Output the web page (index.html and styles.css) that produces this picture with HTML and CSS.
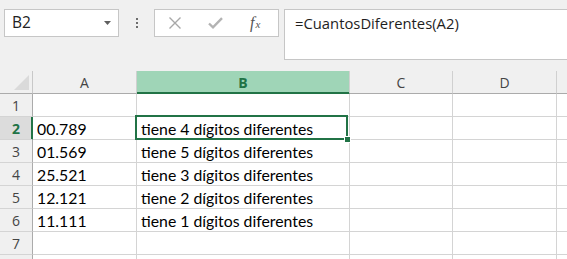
FILE: index.html
```html
<!DOCTYPE html>
<html lang="es">
<head>
<meta charset="utf-8">
<title>Hoja</title>
<link rel="stylesheet" href="styles.css">
</head>
<body>
<div class="app">
  <div class="toolbar">
    <div class="namebox">
      <span class="ref">B2</span>
      <svg class="caret" width="7" height="4" viewBox="0 0 7 4"><polygon points="0,0 7,0 3.5,4" fill="#5f5f5f"/></svg>
    </div>
    <div class="grip"><i></i><i></i><i></i></div>
    <div class="fxbtns">
      <svg class="btn-icon" width="14" height="14" viewBox="0 0 14 14"><path d="M1.5 1.5 L12.5 12.5 M12.5 1.5 L1.5 12.5" stroke="#a8a8a8" stroke-width="1.4" fill="none"/></svg>
      <svg class="btn-icon" width="15" height="12" viewBox="0 0 15 12"><path d="M1 6.5 L5 10.3 L14 1.2" stroke="#b3b3b3" stroke-width="2.4" fill="none"/></svg>
      <span class="fx"><span class="fx-f">f</span><span class="fx-x">x</span></span>
    </div>
    <div class="formula">=CuantosDiferentes(A2)</div>
  </div>

  <div class="sheet">
    <div class="corner"><svg width="15" height="15" viewBox="0 0 15 15"><polygon points="15,0 15,15 0,15" fill="#dadada"/></svg></div>
    <div class="colhead">A</div>
    <div class="colhead active">B</div>
    <div class="colhead">C</div>
    <div class="colhead">D</div>
    <div class="colhead"></div>

    <div class="rowhead">1</div><div class="cell"></div><div class="cell"></div><div class="cell"></div><div class="cell"></div><div class="cell"></div>
    <div class="rowhead active">2</div><div class="cell">00.789</div><div class="cell">tiene 4 dígitos diferentes</div><div class="cell"></div><div class="cell"></div><div class="cell"></div>
    <div class="rowhead">3</div><div class="cell">01.569</div><div class="cell">tiene 5 dígitos diferentes</div><div class="cell"></div><div class="cell"></div><div class="cell"></div>
    <div class="rowhead">4</div><div class="cell">25.521</div><div class="cell">tiene 3 dígitos diferentes</div><div class="cell"></div><div class="cell"></div><div class="cell"></div>
    <div class="rowhead">5</div><div class="cell">12.121</div><div class="cell">tiene 2 dígitos diferentes</div><div class="cell"></div><div class="cell"></div><div class="cell"></div>
    <div class="rowhead">6</div><div class="cell">11.111</div><div class="cell">tiene 1 dígitos diferentes</div><div class="cell"></div><div class="cell"></div><div class="cell"></div>
    <div class="rowhead">7</div><div class="cell"></div><div class="cell"></div><div class="cell"></div><div class="cell"></div><div class="cell"></div>
    <div class="rowhead"></div><div class="cell"></div><div class="cell"></div><div class="cell"></div><div class="cell"></div><div class="cell"></div>
  </div>

  <div class="selection"></div>
  <div class="handle"></div>
</div>
</body>
</html>
```

FILE: styles.css
```css
* { box-sizing: border-box; }
html, body { margin: 0; padding: 0; }
body { background: #f0f0f0; }

.app {
  position: relative;
  width: 567px;
  height: 259px;
  overflow: hidden;
  background: #f0f0f0;
  font-family: "Open Sans", "Noto Sans", sans-serif;
}

/* ---------- toolbar ---------- */
.toolbar {
  display: flex;
  align-items: flex-start;
  height: 71px;
  padding: 9px 0 0 4px;
}
.namebox {
  flex: none;
  width: 115px;
  height: 28px;
  background: #fff;
  border: 1px solid #c6c6c6;
  display: flex;
  align-items: center;
  justify-content: space-between;
  padding: 0 7px 0 7px;
}
.ref {
  font-size: 15.5px;
  color: #222;
  line-height: 1;
}
.caret { display: block; margin-top: -1px; }

.grip {
  flex: none;
  width: 35px;
  height: 28px;
  display: flex;
  flex-direction: column;
  align-items: center;
  justify-content: center;
  gap: 2px;
}
.grip i {
  display: block;
  width: 2px;
  height: 2px;
  background: #6d6d6d;
}

.fxbtns {
  flex: none;
  width: 125px;
  height: 28px;
  background: #fff;
  border: 1px solid #c6c6c6;
  display: flex;
  align-items: center;
  padding-left: 13px;
}
.fxbtns .btn-icon { display: block; flex: none; }
.fxbtns .btn-icon:nth-child(2) { margin-left: 26px; }
.fx {
  margin-left: 27px;
  font-family: "Liberation Serif", "DejaVu Serif", serif;
  font-style: italic;
  color: #555;
  line-height: 1;
  display: flex;
  align-items: baseline;
}
.fx-f { font-size: 16px; }
.fx-x { font-size: 11px; margin-left: 1px; }

.formula {
  flex: none;
  width: 320px;
  height: 51px;
  margin-left: 5px;
  background: #fff;
  border: 1px solid #c6c6c6;
  padding: 3px 0 0 10px;
  font-size: 14.8px;
  line-height: 20px;
  color: #1e1e1e;
}

/* ---------- sheet ---------- */
.sheet {
  display: grid;
  grid-template-columns: 33px 104px 213px 103px 104px 60px;
  grid-auto-rows: 23px;
}
.corner, .colhead, .rowhead {
  background: #f0f0f0;
  color: #444;
  font-size: 14px;
  display: flex;
  align-items: center;
  justify-content: center;
}
.corner {
  border-right: 1px solid #c8c8c8;
  border-bottom: 1px solid #ababab;
  align-items: flex-end;
  justify-content: flex-end;
  padding: 0 3px 3px 0;
}
.corner svg { display: block; }
.colhead {
  border-right: 1px solid #d0d0d0;
  border-bottom: 1px solid #ababab;
  padding-top: 1px;
}
.colhead.active {
  background: #9fd5b7;
  color: #217346;
  font-weight: 700;
  border-bottom-color: #217346;
  box-shadow: inset 0 -1px 0 #217346;
}
.rowhead {
  border-right: 1px solid #ababab;
  border-bottom: 1px solid #d4d4d4;
}
.rowhead.active {
  background: #dcdcdc;
  color: #217346;
  font-weight: 700;
  border-right-color: #217346;
  box-shadow: inset -1px 0 0 #217346;
}
.cell {
  background: #fff;
  border-right: 1px solid #d4d4d4;
  border-bottom: 1px solid #d4d4d4;
  font-family: "Lato", "Open Sans", sans-serif;
  font-size: 15.8px;
  color: #000;
  padding: 2px 0 0 4px;
  white-space: nowrap;
  overflow: hidden;
  line-height: 20px;
}

/* ---------- selection overlay ---------- */
.selection {
  position: absolute;
  left: 135px;
  top: 115px;
  width: 213px;
  height: 25px;
  border: 2px solid #217346;
  pointer-events: none;
}
.handle {
  position: absolute;
  left: 344px;
  top: 136px;
  width: 7px;
  height: 7px;
  background: #217346;
  border: 1px solid #fff;
}
```
